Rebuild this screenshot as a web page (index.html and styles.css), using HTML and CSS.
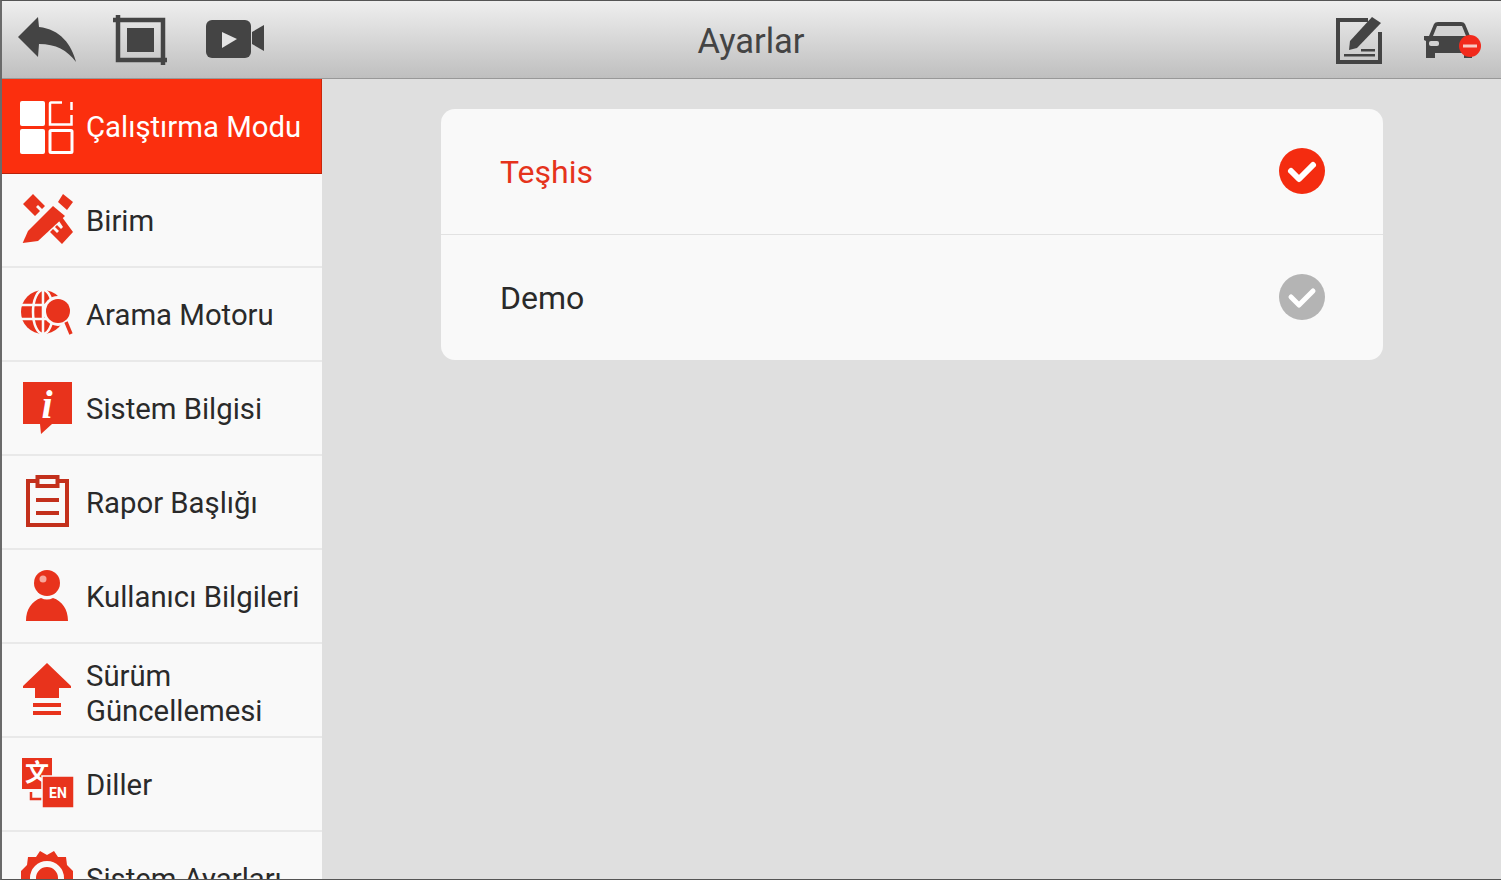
FILE: index.html
```html
<!DOCTYPE html>
<html lang="tr">
<head>
    <meta charset="UTF-8">
    <title>Ayarlar</title>
    <link rel="stylesheet" href="styles.css">
</head>
<body>
    <div class="app">
        <header class="topbar">
            <div class="topbar-left">
                <svg class="ic-back" width="58" height="45" viewBox="0 0 58 45"><path d="M0 20 L20 0 L21 10 C42 12 54 28 58 45 C49 33 38 27 21 27 L20 40 Z"/></svg>
                <svg class="ic-crop" width="55" height="50" viewBox="0 0 55 50">
                    <path d="M0 5 H50 V43 M5 0 V45 H54 M50 45 V50" fill="none" stroke-width="4.5"/>
                    <rect x="14" y="13" width="27" height="24"/>
                </svg>
                <svg class="ic-video" width="60" height="39" viewBox="0 0 60 39">
                    <rect x="1" y="0" width="45" height="38" rx="6"/>
                    <path d="M47 12 L59 5 V31 L47 24 Z"/>
                    <path d="M17 12 L32 19 L17 28 Z" fill="#e4e4e4"/>
                </svg>
            </div>
            <h1 class="title">Ayarlar</h1>
            <div class="topbar-right">
                <svg class="ic-edit" width="48" height="50" viewBox="0 0 48 50">
                    <path d="M33 5 H3 V47 H45 V17" fill="none" stroke-width="4"/>
                    <path d="M14 35 L15 26 L37 2 L46 8 L22 33 Z"/>
                    <rect x="9" y="39" width="31" height="2.5"/>
                    <rect x="26" y="34" width="14" height="2.5"/>
                </svg>
                <svg class="ic-car" width="58" height="38" viewBox="0 0 58 38">
                    <path d="M1 15 H6 L11 3 Q12 1 15 1 H38 Q41 1 42 3 L47 15 H51 V19 L49 20 V37 H41 V32 H12 V37 H3 V20 L1 19 Z"/>
                    <path d="M10 15 L14 5 H39 L43 15 Z" fill="#d2d2d2"/>
                    <rect x="6" y="20" width="10" height="5" rx="2" fill="#d2d2d2"/>
                    <circle cx="47" cy="25" r="11" fill="#f22a1c"/>
                    <rect x="40" y="23.5" width="14" height="3" fill="#f7c9c4"/>
                </svg>
            </div>
        </header>

        <div class="main">
            <nav class="sidebar">
                <a class="side-item active">
                    <svg class="side-icon" width="54" height="54" viewBox="0 0 54 54">
                        <rect x="0" y="0" width="25" height="25" rx="2" fill="#fff"/>
                        <rect x="0" y="28" width="25" height="25" rx="2" fill="#fff"/>
                        <path d="M42 1.500 H31 Q30 1.500 30 3 V23.500 H51.500 V14 M51.500 1 V9" fill="none" stroke="#fff" stroke-width="2.500"/>
                        <rect x="30" y="29.500" width="22" height="22" rx="1" fill="none" stroke="#fff" stroke-width="3"/>
                    </svg>
                    <span>Çalıştırma Modu</span>
                </a>
                <a class="side-item">
                    <svg class="side-icon" width="54" height="54" viewBox="0 0 54 54">
                        <path d="M3 11 L13 1 L25 13 L22 16 L18 12 L16 14 L20 18 L15 23 Z"/>
                        <path d="M42 24 L53 39 L42 51 L30 39 L33 36 L37 40 L39 38 L35 34 L37 32 L41 36 L43 34 L39 28 Z"/>
                        <path d="M2.700 50 L8 38 L33 13 L45 23 L18 48 Z"/>
                        <path d="M38 9 L43 1 L53 9 L47 17 Z"/>
                    </svg>
                    <span>Birim</span>
                </a>
                <a class="side-item">
                    <svg class="side-icon" width="54" height="54" viewBox="0 0 54 54">
                        <circle cx="23" cy="25" r="22"/>
                        <g class="globe-lines">
                            <ellipse cx="23" cy="25" rx="10" ry="22"/>
                            <path d="M1 18 H45 M1 32 H45 M23 3 V47"/>
                        </g>
                        <circle cx="38" cy="24" r="15" fill="#f9f9f9"/>
                        <circle cx="38" cy="24" r="12"/>
                        <path d="M46 35 L51 47" fill="none" stroke-width="3.500"/>
                    </svg>
                    <span>Arama Motoru</span>
                </a>
                <a class="side-item">
                    <svg class="side-icon" width="54" height="54" viewBox="0 0 54 54">
                        <path d="M3 1 H52 V43 H32 L21 53 L20 43 H3 Z"/>
                        <text class="ic-i" x="27" y="37">i</text>
                    </svg>
                    <span>Sistem Bilgisi</span>
                </a>
                <a class="side-item">
                    <svg class="side-icon ic-report" width="54" height="54" viewBox="0 0 54 54">
                        <path d="M16 6 H8 V50 H47 V6 H39" fill="none" stroke-width="4"/>
                        <rect x="17.500" y="2" width="20" height="9" fill="none" stroke-width="4"/>
                        <path d="M16 25 H39 M16 38 H39" fill="none" stroke-width="4"/>
                    </svg>
                    <span>Rapor Başlığı</span>
                </a>
                <a class="side-item">
                    <svg class="side-icon" width="54" height="54" viewBox="0 0 54 54">
                        <circle cx="27" cy="14" r="13"/>
                        <circle cx="23" cy="10" r="3.500" fill="#f7a79b"/>
                        <path d="M6 52 C6 40 12 32 21 29 Q27 32 33 29 C42 32 48 40 48 52 Z"/>
                    </svg>
                    <span>Kullanıcı Bilgileri</span>
                </a>
                <a class="side-item two-line">
                    <svg class="side-icon" width="54" height="54" viewBox="0 0 54 54">
                        <path d="M27 0 L51 23 V25 H39 V35 H15 V25 H3 V23 Z"/>
                        <rect x="13" y="40" width="28" height="4"/>
                        <rect x="13" y="48" width="28" height="4"/>
                    </svg>
                    <span>Sürüm Güncellemesi</span>
                </a>
                <a class="side-item">
                    <svg class="side-icon" width="54" height="54" viewBox="0 0 54 54">
                        <rect x="2" y="1" width="30" height="31"/>
                        <path d="M11 35 V42 H24" fill="none" stroke-width="2.500"/>
                        <text class="ic-zi" x="17" y="24">文</text>
                        <rect x="22" y="19" width="32" height="32" stroke="#f9f9f9" stroke-width="1.500"/>
                        <text class="ic-en" x="38" y="41">EN</text>
                    </svg>
                    <span>Diller</span>
                </a>
                <a class="side-item">
                    <svg class="side-icon" width="54" height="54" viewBox="0 0 54 54">
                        <path d="M20 0 L27 4 L34 0 L38 6 L46 6 L47 14 L53 20 L53 40 L47 46 L38 52 H16 L7 46 L1 40 V20 L7 14 L8 6 L16 6 Z"/>
                        <circle cx="27" cy="27" r="14" fill="none" stroke="#f9f9f9" stroke-width="6"/>
                    </svg>
                    <span>Sistem Ayarları</span>
                </a>
            </nav>

            <section class="content">
                <div class="card">
                    <div class="card-row selected">
                        <span>Teşhis</span>
                        <svg class="check" width="46" height="46" viewBox="0 0 46 46"><circle cx="23" cy="23" r="23" fill="#f42c10"/><path d="M12 23 L20 31 L34 17" fill="none" stroke="#fff" stroke-width="6" stroke-linecap="round" stroke-linejoin="round"/></svg>
                    </div>
                    <div class="card-row">
                        <span>Demo</span>
                        <svg class="check" width="46" height="46" viewBox="0 0 46 46"><circle cx="23" cy="23" r="23" fill="#b4b4b4"/><path d="M12 23 L20 31 L34 17" fill="none" stroke="#fff" stroke-width="5" stroke-linecap="round" stroke-linejoin="round"/></svg>
                    </div>
                </div>
            </section>
        </div>
    </div>
</body>
</html>
```

FILE: styles.css
```css
* {
    box-sizing: border-box;
}
html, body {
    margin: 0;
    height: 100%;
    overflow: hidden;
}
body {
    font-family: Roboto, "Noto Sans CJK SC", sans-serif;
    color: #2a2a2a;
}
.app {
    height: 880px;
    display: flex;
    flex-direction: column;
    border-top: 1px solid #555;
    border-left: 2px solid #6a6a6a;
    border-bottom: 1px solid #555;
    overflow: hidden;
}
.topbar {
    flex: 0 0 78px;
    display: grid;
    grid-template-columns: 1fr auto 1fr;
    align-items: center;
    background: linear-gradient(#efefef, #bfbfbf);
    border-bottom: 1px solid #989898;
}
.topbar svg {
    display: block;
    fill: #444;
    stroke: #444;
    stroke-width: 0;
}
.topbar-left {
    display: flex;
    align-items: center;
    gap: 37px;
    padding-left: 16px;
}
.topbar-right {
    display: flex;
    align-items: center;
    justify-content: flex-end;
    gap: 40px;
    padding-right: 20px;
}
.title {
    margin: 0 0 0 -1px;
    padding-top: 3px;
    font-size: 34.500px;
    font-weight: 400;
    color: #444;
}
.main {
    flex: 1;
    display: flex;
    min-height: 0;
    background: #dfdfdf;
}
.sidebar {
    flex: 0 0 320px;
    background: #f9f9f9;
    overflow: hidden;
}
.side-item {
    height: 94px;
    display: flex;
    align-items: center;
    gap: 12px;
    padding: 3px 8px 0 18px;
    font-size: 29.300px;
    line-height: 35px;
    color: #2a2a2a;
    border-bottom: 2px solid #e9e9e9;
}
.side-item.two-line {
    padding-top: 7px;
}
.side-item.active {
    height: 95px;
    background: #fb2f0e;
    color: #fff;
    border-bottom: 1px solid #b9220a;
    border-right: 1px solid #c9260b;
}
.side-icon {
    flex: none;
    margin-top: -3px;
    fill: #e8331c;
    stroke: #e8331c;
    stroke-width: 0;
}
.active .side-icon {
    margin-top: 0;
}
.two-line .side-icon {
    margin-top: -7px;
}
.ic-report {
    stroke: #c3301c;
}
.globe-lines {
    fill: none;
    stroke: #f9f9f9;
    stroke-width: 2.500;
}
.ic-i {
    font-family: "Liberation Serif", serif;
    font-style: italic;
    font-weight: 700;
    font-size: 40px;
    fill: #fff;
    text-anchor: middle;
}
.ic-zi {
    font-size: 24px;
    font-weight: 700;
    fill: #fff;
    text-anchor: middle;
}
.ic-en {
    font-size: 14px;
    font-weight: 700;
    fill: #fff;
    text-anchor: middle;
}
.content {
    flex: 1;
    padding: 30px 118px 0 119px;
}
.card {
    background: #f9f9f9;
    border-radius: 14px;
}
.card-row {
    height: 125px;
    display: flex;
    align-items: center;
    justify-content: space-between;
    padding: 0 58px 0 59px;
    font-size: 32px;
    color: #2a2a2a;
}
.card-row span {
    padding-top: 1px;
}
.card-row + .card-row {
    height: 126px;
    border-top: 1px solid #e2e2e2;
}
.card-row.selected {
    color: #e5331c;
}
.check {
    display: block;
    margin-top: -2px;
}
```
